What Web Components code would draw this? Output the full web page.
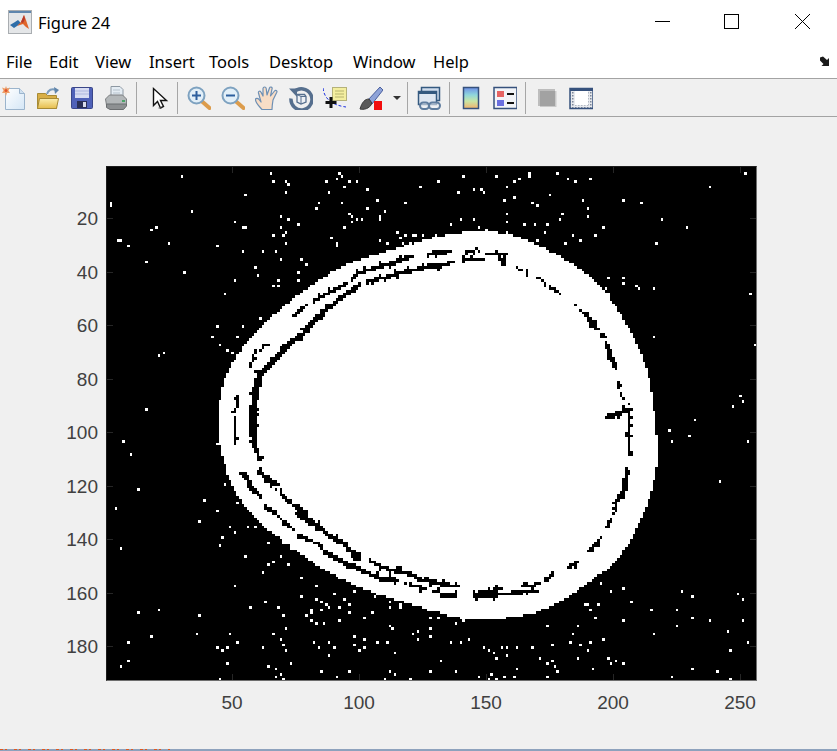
<!DOCTYPE html>
<html>
<head>
<meta charset="utf-8">
<title>Figure 24</title>
<style>
    html, body { margin: 0; height: 100%; overflow: hidden; background: #f0f0f0; }
    figure-window { height: 751px; }
</style>
</head>
<body>
<figure-window>
    <title-bar slot="title">Figure 24</title-bar>
    <menu-bar slot="menu">
        <span>File</span><span>Edit</span><span>View</span><span>Insert</span><span>Tools</span><span>Desktop</span><span>Window</span><span>Help</span>
    </menu-bar>
    <tool-bar slot="tools"></tool-bar>
    <binary-axes></binary-axes>
</figure-window>

<script>
class FigureWindow extends HTMLElement {
    constructor() {
        super()
        this.attachShadow({mode: 'open'})
        this.shadowRoot.innerHTML = `
            <style>
                :host { display: flex; flex-direction: column; width: 837px; background: #f0f0f0; }
                main { flex: 1; padding: 49px 0 0 0; min-height: 0; }
                footer {
                    height: 2px;
                    background:
                        repeating-linear-gradient(90deg, #dd5a22 0 3px, transparent 3px 5px, #dd5a22 5px 7px, transparent 7px 14px) 0 0 / 170px 1px no-repeat,
                        #8ea2bd;
                }
            </style>
            <slot name="title"></slot>
            <slot name="menu"></slot>
            <slot name="tools"></slot>
            <main><slot></slot></main>
            <footer></footer>
        `
    }
}

class TitleBar extends HTMLElement {
    constructor() {
        super()
        this.attachShadow({mode: 'open'})
        this.shadowRoot.innerHTML = `
            <style>
                :host { display: flex; align-items: center; height: 44px; background: #fff; color: #000; font: 16.5px "Noto Sans", "Open Sans", sans-serif; }
                .logo { margin: 0 6px 0 8px; flex: none; }
                .text { flex: 1; }
                .ctl { display: block; flex: none; }
            </style>
            <svg class="logo" width="24" height="24" viewBox="0 0 24 24">
                <rect x=".5" y=".5" width="23" height="23" fill="#e4e6e8" stroke="#a9adb1"/>
                <rect x="1" y="1" width="22" height="2" fill="#5f86ad"/>
                <path d="M2 15l5-3 3-2 3 3-4 3-3 2z" fill="#2f6ea8"/>
                <path d="M9 16l4-4 3-7 2 5 3 9-3-2-3-3z" fill="#e0652a"/>
                <path d="M13 12l3-7 1 4-2 4z" fill="#b5382a"/>
            </svg>
            <span class="text"><slot></slot></span>
            <svg class="ctl" width="203" height="44" viewBox="634 0 203 44" fill="none" stroke="#000" stroke-width="1" shape-rendering="crispEdges">
                <path d="M655 21.5h15"/>
                <rect x="724.5" y="14.5" width="14" height="14"/>
                <path d="M795 14l15 15M810 14l-15 15" shape-rendering="auto"/>
            </svg>
        `
    }
}

class MenuBar extends HTMLElement {
    constructor() {
        super()
        this.attachShadow({mode: 'open'})
        this.shadowRoot.innerHTML = `
            <style>
                :host { display: flex; align-items: center; height: 34px; box-sizing: border-box; background: #fff; color: #000; padding: 0 0 0 6px; font: 16.5px "Noto Sans", "Open Sans", sans-serif; }
                nav { display: grid; grid-template-columns: 43px 46px 54px 60px 60px 84px 80px auto; flex: 1; }
                svg { margin-right: 6px; }
            </style>
            <nav><slot></slot></nav>
            <svg width="12" height="11" viewBox="0 0 12 11"><path d="M1 1.500l3-1 4 3.500 2-2v8H2.500l2-2-3.500-3.500z" fill="#1a1a1a"/></svg>
        `
    }
}

const ICONS = {
    'new': `<defs><linearGradient id="pg" x1="0" y1="0" x2="1" y2="1"><stop offset="0" stop-color="#fff"/><stop offset="1" stop-color="#d4e6f6"/></linearGradient></defs><path d="M3.500 2.500h14l5 5v16h-19z" fill="url(#pg)" stroke="#9bb4cc"/><path d="M17.500 2.500v5h5" fill="#cfe0ef" stroke="#9bb4cc"/><path d="M4 0l1 2.500 3-1-1.500 3L8 7l-3 0-1 3-1-3-3 0 1.500-2.500L0 1.500l3 1z" fill="#efa06a"/><circle cx="4" cy="4.500" r="1.500" fill="#e2552a"/>`,
    open: `<defs><linearGradient id="fd" x1="0" y1="0" x2="0" y2="1"><stop offset="0" stop-color="#fbeeb0"/><stop offset="1" stop-color="#e6bd4c"/></linearGradient></defs><path d="M1.500 7.500h8l2 2h9v13h-19z" fill="#d8ae45" stroke="#a78a35"/><path d="M1.500 22.500l2-10h19l-2 10z" fill="url(#fd)" stroke="#a78a35"/><path d="M11 8c1-4 5-6 9-4" fill="none" stroke="#7c9cbc" stroke-width="2"/><path d="M18 1l5 3-4 4z" fill="#5f84aa"/>`,
    save: `<rect x="1.500" y="1.500" width="21" height="21" rx="1" fill="#4f61b8" stroke="#3a4688"/><rect x="5" y="2" width="14" height="10" fill="#d7dcf2"/><path d="M5 5h14M5 8h14" stroke="#aeb7de"/><rect x="7" y="15" width="10" height="7" fill="#2a2f55"/><rect x="13" y="16" width="3" height="5" fill="#d9dcea"/>`,
    print: `<path d="M7 .5h9l3 3V12H7z" fill="#e4ecf3" stroke="#8d98a2"/><path d="M9 4h7M9 7h7" stroke="#b6c2cc"/><path d="M1.500 13l4-4h13l4 4v6H2.500z" fill="#b3b7b9" stroke="#7c7f81"/><path d="M2.500 18h20v2l-3 3.500H6l-3.500-2z" fill="#8d9092" stroke="#6b6e70"/><rect x="18" y="14" width="3" height="2" fill="#4ba368"/>`,
    pointer: `<path d="M5.500 2.500v17l4-4 3 6.500 3-1.500-3-6h6z" fill="#fff" stroke="#111" stroke-width="1.400" stroke-linejoin="miter"/><path d="M10.500 22h3" stroke="#666"/>`,
    zoomin: `<path d="M14.500 15l8 7" stroke="#dc9c4c" stroke-width="4" stroke-linecap="round"/><circle cx="9.500" cy="9.500" r="8" fill="#e2eff8" stroke="#7ea2c0" stroke-width="2"/><path d="M9.500 5v9M5 9.500h9" stroke="#2d5f9e" stroke-width="2"/>`,
    zoomout: `<path d="M14.500 15l8 7" stroke="#dc9c4c" stroke-width="4" stroke-linecap="round"/><circle cx="9.500" cy="9.500" r="8" fill="#e2eff8" stroke="#7ea2c0" stroke-width="2"/><path d="M5 9.500h9" stroke="#2d5f9e" stroke-width="2"/>`,
    hand: `<path d="M7 23.500C4 20 .5 17 .5 13.500c0-1.500 2.500-1.500 3.500 0L6 16 3.500 7C3 5 5.500 4.500 6 6.300L8 10 8 2.500c.2-2 3-2 3.200 0L12 9l2.500-7c.6-1.700 3-1 2.600.7L15.500 10l4-5c1-1.400 3-.3 2.300 1.300L18 14c-.5 3-1 6-1 9.500z" fill="#f8ddc6" stroke="#6d8fb4" stroke-width="1.200" stroke-linejoin="round"/>`,
    rotate: `<path d="M5 6a10.500 10.500 0 1 1-3 6.500" fill="none" stroke="#566f8e" stroke-width="3.500"/><path d="M0 2.500h8V11z" fill="#566f8e"/><path d="M8 8.500h7.500l1.500 2v5.500l-5 2-4-2z" fill="#eef1f5" stroke="#566f8e" stroke-width="1.300"/><path d="M12 10.500v7.500M8 8.500l4 2h5" fill="none" stroke="#566f8e"/>`,
    cursor: `<path d="M0 2c1 10 8 17 23 19" fill="none" stroke="#1c2fe0" stroke-dasharray="3 2"/><rect x="9.500" y="1.500" width="14" height="13" fill="#f3ee9f" stroke="#b5b27a"/><path d="M12 5h9M12 8h9M12 11h9" stroke="#b6b36e"/><path d="M8 11v11M2.500 16.500h11" stroke="#111" stroke-width="3"/>`,
    brush: `<path d="M9 14L21 1l3 3-11 14z" fill="#8ea3d8" stroke="#4a5f9e"/><path d="M10 13c-4 0-7 3-9 10 3 1 10 0 12-6z" fill="#5a5a5a" stroke="#3a3a3a"/><rect x="15" y="15" width="8" height="9" fill="#f20d0d"/>`,
    link: `<rect x="4.500" y="1.500" width="18" height="13" fill="#cfdcec" stroke="#34597f" stroke-width="1.500"/><rect x="1.500" y="5.500" width="18" height="13" fill="#dfe7f1" stroke="#34597f" stroke-width="1.500"/><rect x="2" y="5" width="17" height="3" fill="#34597f"/><rect x="3" y="16.500" width="9" height="6.500" rx="3.200" fill="#eef2f6" fill-opacity=".6" stroke="#5f7d9f" stroke-width="2"/><rect x="12" y="16.500" width="11" height="6.500" rx="3.200" fill="#eef2f6" fill-opacity=".6" stroke="#5f7d9f" stroke-width="2"/>`,
    colorbar: `<defs><linearGradient id="cb" x1="0" y1="0" x2="0" y2="1"><stop offset="0" stop-color="#6f8fe6"/><stop offset=".35" stop-color="#8fd6dc"/><stop offset=".65" stop-color="#c8e6a6"/><stop offset="1" stop-color="#f2b26c"/></linearGradient></defs><rect x="4.500" y="1.500" width="15" height="21" fill="url(#cb)" stroke="#36517c" stroke-width="1.500"/>`,
    legend: `<rect x="1" y="1.500" width="23" height="21" fill="#f2f4f8" stroke="#36517c" stroke-width="1.500"/><rect x="4" y="5" width="7" height="6" fill="#e56464"/><rect x="4" y="14" width="7" height="6" fill="#6a6fe0"/><path d="M14 8h7M14 17h7" stroke="#111" stroke-width="2"/>`,
    box: `<rect x="3" y="3" width="17" height="17" fill="#a2a2a2"/><path d="M3 3h17v2H5v15H3z" fill="#bdbdbd"/><path d="M20 5h1.500v16H5v-1h15z" fill="#c9c9c9"/>`,
    plottools: `<defs><pattern id="dt" width="3" height="3" patternUnits="userSpaceOnUse"><rect width="3" height="3" fill="#e8eaee"/><rect width="1.500" height="1.500" fill="#7d8798"/></pattern></defs><rect x="1" y="2.500" width="23" height="20" fill="url(#dt)" stroke="#36517c" stroke-width="1.500"/><rect x="1" y="2" width="23" height="3" fill="#36517c"/><rect x="6" y="5" width="13" height="14" fill="#fff"/>`
}

const TOOL_LAYOUT = [
    {items: ['new', 'open', 'save', 'print'], start: 2, after: 8},
    {items: ['pointer'], start: 11, after: 5},
    {items: ['zoomin', 'zoomout', 'hand', 'rotate', 'cursor'], start: 9, after: 0},
    {items: ['brush'], start: 12, after: 0, arrow: true},
    {items: ['link'], start: 9, after: 8},
    {items: ['colorbar', 'legend'], start: 9, after: 8},
    {items: ['box', 'plottools'], start: 9, after: 0}
]

class ToolBar extends HTMLElement {
    constructor() {
        super()
        this.attachShadow({mode: 'open'})
        let html = ''
        TOOL_LAYOUT.forEach((g, i) => {
            html += `<div class="group" style="margin-left:${g.start}px;margin-right:${g.after}px">`
            g.items.forEach(k => {
                html += `<svg width="24" height="24" viewBox="0 0 24 24" aria-label="${k}">${ICONS[k]}</svg>`
            })
            html += '</div>'
            if (g.arrow) html += '<i class="arrow"></i>'
            if (i < TOOL_LAYOUT.length - 1 && i !== 2) html += '<b class="sep"></b>'
        })
        this.shadowRoot.innerHTML = `
            <style>
                :host { display: flex; align-items: center; height: 39px; box-sizing: border-box; background: #f0f0f0; border-top: 1px solid #a3a3a3; border-bottom: 1px solid #a3a3a3; }
                .group { display: flex; gap: 10px; }
                .sep { width: 1px; height: 32px; background: #a6a6a6; }
                .arrow { width: 0; height: 0; margin: 0 6px 0 10px; border: 4px solid transparent; border-top: 4px solid #333; border-bottom: 0; }
                svg { display: block; }
            </style>
            ${html}
        `
    }
}

// screen px -> image columns/rows
const toCol = x => (x - 106.3) / 2.54
const toRow = y => (y - 166.8) / 2.675
const fromCrop = (ox, oy, pts) => {
    const out = []
    for (let i = 0; i < pts.length; i += 2) out.push([ox + pts[i] / 3, oy + pts[i + 1] / 3])
    return out
}

const OUTLINE = [
    [217,420],[219,400],[223,380],[233,360],[247,340],[267,320],[290,300],[323,277],[347,263],[390,250],[423,240],[440,236],
    [460,232],[503,232],[513,235],[527,240],[540,246],[570,261],[600,284],[620,313],[640,350],[650,380],[655,420],[658,453],
    [655,477],[649,500],[639,522],[628,544],[614,564],[597,575],[577,591],[557,603],[533,613],[507,618],[463,619],[440,613],
    [410,604],[377,594],[343,581],[310,561],[283,541],[260,524],[240,501],[227,477],[218,440]
]

// [line width in columns, crop x, crop y, points read from that crop]
const CRACKS = [
    [2.2, 210,220, [130,655, 125,590, 132,540, 135,510, 150,460]],
    [1.8, 210,220, [150,460, 180,430, 230,375, 270,345]],
    [1.3, 210,220, [280,335, 300,310, 350,265, 400,225, 445,195]],
    [.9, 210,220, [440,160, 520,135, 600,110]],
    [.8, 210,220, [240,295, 280,260, 340,225, 400,195, 435,170]],
    [1, 210,220, [470,185, 530,170, 600,150, 690,135]],
    [.8, 210,220, [645,100, 720,95]],
    [.5, 210,220, [115,445, 130,405, 170,370]],
    [.5, 210,220, [78,520, 85,550, 70,580, 75,620]],
    [.8, 440,220, [0,135, 40,125]],
    [1, 440,220, [70,117, 120,117]],
    [.5, 440,220, [0,95, 20,93]],
    [.5, 440,220, [70,90, 115,90]],
    [.5, 440,220, [130,100, 200,100]],
    [.8, 440,220, [165,115, 200,125]],
    [.5, 440,220, [225,142, 245,150]],
    [.5, 440,220, [260,150, 262,165]],
    [.5, 440,220, [295,175, 315,190]],
    [.8, 440,220, [330,200, 360,222]],
    [.5, 440,220, [400,257, 440,285]],
    [1.2, 440,220, [440,285, 470,325]],
    [.7, 440,220, [478,340, 490,358]],
    [1.3, 440,220, [495,370, 525,440]],
    [.5, 440,220, [535,485, 540,525, 557,550]],
    [.5, 440,220, [565,565, 560,650]],
    [1.2, 440,220, [497,590, 555,572]],
    [1.1, 210,420, [125,0, 130,70, 150,120]],
    [1.5, 210,420, [145,155, 195,190]],
    [.8, 210,420, [185,195, 230,240, 280,275]],
    [1.4, 210,420, [260,280, 320,315, 350,340, 410,375]],
    [1.6, 210,420, [410,385, 450,415]],
    [1, 210,420, [475,420, 530,445, 605,462]],
    [1, 210,420, [620,475, 720,495]],
    [1.3, 210,420, [100,160, 130,210, 150,225]],
    [.8, 210,420, [165,255, 200,285, 250,330]],
    [.8, 210,420, [265,345, 330,375]],
    [1.2, 210,420, [340,395, 400,425, 500,470]],
    [1, 210,420, [505,475, 560,478]],
    [.6, 210,420, [590,490, 720,525]],
    [.6, 210,420, [72,0, 72,75]],
    [.8, 440,420, [565,0, 565,100]],
    [1.3, 440,420, [560,150, 545,230]],
    [.7, 440,420, [535,225, 520,275]],
    [.8, 440,420, [510,295, 500,322]],
    [.9, 440,420, [482,352, 440,402]],
    [.9, 440,420, [412,425, 385,438]],
    [.9, 440,420, [345,455, 310,480]],
    [.7, 440,420, [295,490, 240,500]],
    [1, 440,420, [290,510, 180,522, 100,530]],
    [.8, 440,420, [180,505, 100,520]],
    [.7, 440,420, [0,495, 50,495]],
    [.7, 440,420, [0,525, 50,525]]
]

const DOTS = [
    [106,166,[225,28,12,115,255,133,133,188,42,220,187,229,415,83,385,164,415,181,491,19,499,43,538,45,545,52,538,79,521,148,545,157,575,172,521,181,538,196,529,205,499,205,538,232,697,19,704,28,689,35,660,43,729,43,751,43,712,59,667,79,781,67,637,107,704,107,629,124,812,103,781,124,835,133,729,140,736,148,751,160,766,157,736,169,712,184,820,148,823,157,675,217,689,237,941,59,897,107,872,196,880,212,897,205,820,220,842,229,889,229,911,229,919,209,926,205,946,205,987,205]],
    [430,166,[100,28,24,43,84,76,130,67,153,67,160,79,202,28,298,19,301,28,382,19,412,35,435,43,481,40,268,35,252,43,229,59,358,83,222,100,252,91,306,107,321,115,459,100,474,124,580,103,634,107,840,59,946,19,232,140,397,140,390,157,474,148,229,164,61,172,91,157,130,157,145,181,168,188,283,172,313,172,351,172,343,196,226,196,519,181,427,205,496,205,451,220,405,229,321,220,694,157,770,181,679,229,16,205]],
    [106,590,[583,16,682,8,744,3,630,25,645,33,660,40,667,48,712,25,697,48,729,40,805,16,850,33,853,48,880,52,430,48,477,33,515,48,519,48,645,56,613,64,598,73,529,73,796,64,773,81,613,88,630,97,652,97,697,88,96,64,156,57,279,73,538,112,850,104,858,112,971,81,971,112,934,121,919,133,934,145,971,136,271,128,370,128,499,128,133,136,64,154,393,154,521,145,529,161,622,154,667,154,744,136,773,145,812,154,843,154,331,169,346,178,362,169,469,169,538,178,637,169,682,169,744,161,773,169,758,178,865,185,667,193,64,209,42,226,362,217,484,226,553,222,506,233,521,250,506,257,529,265,645,241,729,245,689,257,850,241,865,250,971,241,338,265,835,265,911,265]],
    [430,590,[543,3,756,3,786,16,924,8,939,25,603,33,469,40,504,40,481,60,664,57,741,57,496,81,786,81,840,88,939,88,580,88,73,97,100,88,24,81,351,104,442,104,741,104,427,128,672,128,892,121,115,145,519,145,61,154,91,154,420,154,481,154,954,154,367,161,451,161,160,169,175,178,214,169,229,169,259,169,306,169,192,185,474,178,901,178,232,193,199,202,328,202,442,202,535,205,31,209,370,209,351,217,543,217,558,209,580,217,375,226,259,233,489,233,786,233,76,241,382,241,862,241,184,250,145,257,222,257,252,257,351,257,726,257,175,265,199,265,901,265]],
    [210,220,[20,80,95,90,155,90,195,95,210,115,270,115,285,130,135,145,140,162,75,185,185,200,205,185,205,200,45,225,265,155,265,178,100,18,185,42,220,42,225,35,225,70,360,55,378,72,265,10,210,18,400,20,425,5,150,292,95,315,18,315,5,348,80,348,25,372,52,388,68,395]],
    [440,220,[650,68,505,170,550,170,550,187,590,195,595,202,640,202,495,202,505,218,640,348,690,628]],
    [210,420,[18,70,42,190,18,270,80,250,58,318,110,320,135,318,72,335,35,350,25,372,170,365,215,368,103,405,240,380,265,395,210,405,190,425,170,435,155,455,235,430,270,470,73,500,270,525,118,560,165,545,205,560,215,582,285,582,300,570,318,495,318,535,370,518,400,535,350,555,385,560,330,568,415,580,435,510,490,525,540,545,485,575,570,550,540,560,650,565]],
    [440,420,[690,28,480,487,550,502,512,510,573,543,440,550,470,550,450,570,632,565,710,565]],
    [0,0,[435,1224,369,1320,390,1365,330,612,354,723,438,783,465,684,384,735,549,819,492,1056,474,1065,342,1521,363,1647,414,1470,615,1500,600,1560,2250,885,2220,1185,2199,1215,2226,1200,2067,1305,2082,1260,2160,1440,2241,1320,2016,1326,2262,1035]]
]

function paintImage(canvas) {
    const ctx = canvas.getContext('2d', {willReadFrequently: true})
    const w = canvas.width, h = canvas.height

    // outline runs through midpoints so the blob edge stays round
    const n = OUTLINE.length
    const mid = i => {
        const a = OUTLINE[i % n], b = OUTLINE[(i + 1) % n]
        return [toCol((a[0] + b[0]) / 2), toRow((a[1] + b[1]) / 2)]
    }
    const shape = new Path2D()
    shape.moveTo(...mid(0))
    for (let i = 1; i <= n; i++) {
        const p = OUTLINE[i % n]
        shape.quadraticCurveTo(toCol(p[0]), toRow(p[1]), ...mid(i))
    }
    shape.closePath()

    // blob alone first, for the mask
    ctx.fillStyle = '#000'
    ctx.fillRect(0, 0, w, h)
    ctx.fillStyle = '#fff'
    ctx.fill(shape)
    const solid = ctx.getImageData(0, 0, w, h).data

    ctx.strokeStyle = '#000'
    ctx.lineCap = 'round'
    ctx.lineJoin = 'round'
    CRACKS.forEach(([lw, ox, oy, pts]) => {
        ctx.lineWidth = lw
        ctx.beginPath()
        fromCrop(ox, oy, pts).forEach(([x, y], i) => i ? ctx.lineTo(toCol(x), toRow(y)) : ctx.moveTo(toCol(x), toRow(y)))
        ctx.stroke()
    })

    // hard threshold so it reads as a binary image
    const img = ctx.getImageData(0, 0, w, h)
    const px = img.data
    const blob = new Uint8Array(w * h)
    const on = new Uint8Array(w * h)
    for (let i = 0; i < w * h; i++) {
        blob[i] = solid[i * 4] > 127 ? 1 : 0
        on[i] = solid[i * 4] > 250 ? (px[i * 4] > 190 ? 1 : 0) : blob[i]
    }

    // roughen the crack edges only, the outer edge of the blob stays clean
    let seed = 24
    const rnd = () => (seed = (seed * 1664525 + 1013904223) % 4294967296) / 4294967296
    const src = on.slice()
    for (let y = 1; y < h - 1; y++) {
        for (let x = 1; x < w - 1; x++) {
            const i = y * w + x
            if (blob[i - 1] + blob[i + 1] + blob[i - w] + blob[i + w] < 4) continue
            const near = src[i - 1] + src[i + 1] + src[i - w] + src[i + w]
            if (!src[i] && near >= 3 && rnd() < .18) on[i] = 1
            else if (src[i] && near <= 3 && rnd() < .14) on[i] = 0
        }
    }
    DOTS.forEach(([ox, oy, pts]) => {
        fromCrop(ox, oy, pts).forEach(([x, y]) => {
            const c = Math.floor(toCol(x)), r = Math.floor(toRow(y))
            if (c >= 0 && c < w && r >= 0 && r < h) on[r * w + c] = 1
        })
    })
    for (let i = 0; i < w * h; i++) {
        const v = on[i] ? 255 : 0
        px[i * 4] = px[i * 4 + 1] = px[i * 4 + 2] = v
        px[i * 4 + 3] = 255
    }
    ctx.putImageData(img, 0, 0)
}

class BinaryAxes extends HTMLElement {
    constructor() {
        super()
        this.attachShadow({mode: 'open'})
        const xs = [50, 100, 150, 200, 250]
        const ys = [20, 40, 60, 80, 100, 120, 140, 160, 180]
        const xPos = v => 106.3 + (v - .5) * 2.54 - 106
        const yPos = v => (v - .5) * 2.675
        this.shadowRoot.innerHTML = `
            <style>
                :host { display: grid; grid-template-columns: 106px 651px; grid-template-rows: 515px 50px; color: #404040; font: 19px "Liberation Sans", Arial, sans-serif; }
                .ylabels, .xlabels, .plot { position: relative; }
                .plot { box-sizing: border-box; border-left: 1px solid #1c1c1c; border-top: 1px solid #1c1c1c; border-right: 1px solid #6e6e6e; border-bottom: 1px solid #6e6e6e; background: #000; overflow: hidden; }
                canvas { display: block; width: 650px; height: 514px; image-rendering: pixelated; }
                .ylabels span { position: absolute; right: 8px; transform: translateY(calc(-50% + 1px)); }
                .xlabels { grid-column: 2; }
                .xlabels span { position: absolute; top: 11px; transform: translateX(-50%); }
                .tick { position: absolute; background: #262626; }
            </style>
            <div class="ylabels">${ys.map(v => `<span style="top:${yPos(v)}px">${v}</span>`).join('')}</div>
            <div class="plot">
                <canvas width="256" height="192"></canvas>
                ${xs.map(v => `<i class="tick" style="left:${xPos(v) - 1}px;top:0;width:1px;height:6px"></i><i class="tick" style="left:${xPos(v) - 1}px;bottom:0;width:1px;height:6px"></i>`).join('')}
                ${ys.map(v => `<i class="tick" style="top:${yPos(v) - 1}px;left:0;height:1px;width:6px"></i><i class="tick" style="top:${yPos(v) - 1}px;right:0;height:1px;width:6px"></i>`).join('')}
            </div>
            <div class="xlabels">${xs.map(v => `<span style="left:${xPos(v)}px">${v}</span>`).join('')}</div>
        `
    }

    connectedCallback() {
        paintImage(this.shadowRoot.querySelector('canvas'))
    }
}

customElements.define('figure-window', FigureWindow)
customElements.define('title-bar', TitleBar)
customElements.define('menu-bar', MenuBar)
customElements.define('tool-bar', ToolBar)
customElements.define('binary-axes', BinaryAxes)
</script>
</body>
</html>
